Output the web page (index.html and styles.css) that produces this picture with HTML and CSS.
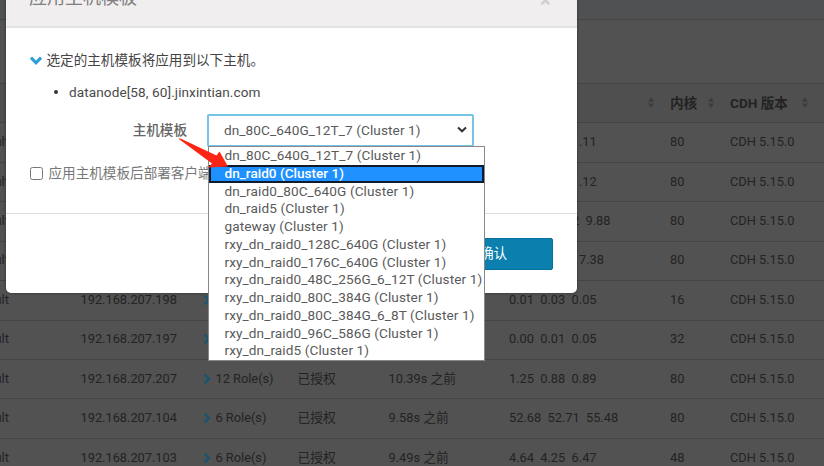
FILE: index.html
```html
<!DOCTYPE html>
<html lang="zh-CN">
<head>
<meta charset="utf-8">
<title>应用主机模板</title>
<link rel="stylesheet" href="styles.css">
</head>
<body>
<svg class="defs" width="0" height="0">
  <symbol id="chev" viewBox="0 0 8 12"><path d="M1.5 1.5 6 6 1.5 10.5" fill="none" stroke="currentColor" stroke-width="2.6"/></symbol>
  <symbol id="sort" viewBox="0 0 6 11"><path d="M0 4.7 3 0.5 6 4.7ZM0 6.5 3 10.7 6 6.5Z" fill="currentColor"/></symbol>
</svg>
<div class="page">
  <div class="topbar"></div>
  <div class="toolbar"></div>
  <div class="row head"><span></span><span></span><span></span><span></span><span></span><span class="load-sort"><svg class="sort"><use href="#sort"/></svg></span><span class="th">内核<svg class="sort"><use href="#sort"/></svg></span><span class="th cdh">CDH 版本<svg class="sort"><use href="#sort"/></svg></span></div>
  <div class="row"><span>ult</span><span></span><span></span><span></span><span></span><span class="tail">.11</span><span>80</span><span>CDH 5.15.0</span></div>
  <div class="row"><span>ult</span><span></span><span></span><span></span><span></span><span class="tail">.12</span><span>80</span><span>CDH 5.15.0</span></div>
  <div class="row"><span>ult</span><span></span><span></span><span></span><span></span><span class="tail wide">2&nbsp; 9.88</span><span>80</span><span>CDH 5.15.0</span></div>
  <div class="row"><span>ult</span><span></span><span></span><span></span><span></span><span class="tail">7.38</span><span>80</span><span>CDH 5.15.0</span></div>
  <div class="row"><span>ult</span><span>192.168.207.198</span><span><svg class="chev"><use href="#chev"/></svg></span><span></span><span></span><span>0.01&nbsp; 0.03&nbsp; 0.05</span><span>16</span><span>CDH 5.15.0</span></div>
  <div class="row"><span>ult</span><span>192.168.207.197</span><span><svg class="chev"><use href="#chev"/></svg></span><span></span><span></span><span>0.00&nbsp; 0.01&nbsp; 0.05</span><span>32</span><span>CDH 5.15.0</span></div>
  <div class="row"><span>ult</span><span>192.168.207.207</span><span><svg class="chev"><use href="#chev"/></svg>12 Role(s)</span><span>已授权</span><span>10.39s 之前</span><span>1.25&nbsp; 0.88&nbsp; 0.89</span><span>80</span><span>CDH 5.15.0</span></div>
  <div class="row"><span>ult</span><span>192.168.207.104</span><span><svg class="chev"><use href="#chev"/></svg>6 Role(s)</span><span>已授权</span><span>9.58s 之前</span><span>52.68&nbsp; 52.71&nbsp; 55.48</span><span>80</span><span>CDH 5.15.0</span></div>
  <div class="row"><span>ult</span><span>192.168.207.103</span><span><svg class="chev"><use href="#chev"/></svg>6 Role(s)</span><span>已授权</span><span>9.49s 之前</span><span>4.64&nbsp; 4.25&nbsp; 6.47</span><span>48</span><span>CDH 5.15.0</span></div>
</div>

<div class="modal">
  <div class="modal-head"><span>应用主机模板</span><span class="close">×</span></div>
  <div class="modal-body">
    <div class="intro"><svg class="down" viewBox="0 0 12 8"><path d="M1.5 1.5 6 6 10.5 1.5" fill="none" stroke="currentColor" stroke-width="2.8"/></svg><span>选定的主机模板将应用到以下主机。</span></div>
    <div class="host"><i></i><span>datanode[58, 60].jinxintian.com</span></div>
    <div class="field">
      <span class="label">主机模板</span>
      <div class="select"><span>dn_80C_640G_12T_7 (Cluster 1)</span><svg viewBox="0 0 10 6"><path d="M1 1 5 4.8 9 1" fill="none" stroke="#333" stroke-width="2"/></svg></div>
    </div>
    <div class="check"><b></b><span>应用主机模板后部署客户端</span></div>
  </div>
  <div class="modal-foot"><div class="btn">确认</div></div>
</div>

<div class="menu">
  <div>dn_80C_640G_12T_7 (Cluster 1)</div>
  <div class="on">dn_raid0 (Cluster 1)</div>
  <div>dn_raid0_80C_640G (Cluster 1)</div>
  <div>dn_raid5 (Cluster 1)</div>
  <div>gateway (Cluster 1)</div>
  <div>rxy_dn_raid0_128C_640G (Cluster 1)</div>
  <div>rxy_dn_raid0_176C_640G (Cluster 1)</div>
  <div>rxy_dn_raid0_48C_256G_6_12T (Cluster 1)</div>
  <div>rxy_dn_raid0_80C_384G (Cluster 1)</div>
  <div>rxy_dn_raid0_80C_384G_6_8T (Cluster 1)</div>
  <div>rxy_dn_raid0_96C_586G (Cluster 1)</div>
  <div>rxy_dn_raid5 (Cluster 1)</div>
</div>
<svg class="arrow" viewBox="0 0 52 32"><path d="M0.5 0.8 Q1.5 0 3 0.8 L38.5 17.5 L41.5 13.5 L50 28.5 L30 29.5 L34 25.5 Z" fill="#fc2414"/></svg>
</body>
</html>
```

FILE: styles.css
```css
* { box-sizing: border-box; }
body {
  margin: 0;
  width: 824px;
  height: 466px;
  overflow: hidden;
  position: relative;
  background: #525252;
  font: 12.8px/18px Roboto, "Noto Sans CJK SC", sans-serif;
  color: #232323;
}
.defs { position: absolute; }
.page { height: 466px; overflow: hidden; }
.topbar { height: 20px; background: #4f5153; border-bottom: 1px solid #434446; }
.toolbar { height: 64px; border-bottom: 1px solid #444; }
.row {
  height: 39.43px;
  padding-bottom: 1px;
  display: grid;
  grid-template-columns: 80.5px 122.5px 94.5px 91px 120.5px 161px 60px 94px;
  align-items: center;
  border-bottom: 1px solid #444;
  white-space: pre;
}
.row > span:first-child { margin-left: -5.5px; }
.row.head { background: #4f4f4f; }
.th { font-weight: 700; font-size: 13.6px; display: flex; align-items: center; gap: 11px; }
.cdh { gap: 14px; }
.sort { width: 6px; height: 11px; color: #3c3c3c; }
.load-sort { padding-left: 139px; display: flex; }
.tail { padding-left: 70px; }
.wide { padding-left: 63px; }
.chev { width: 8px; height: 12px; margin-right: 4.5px; vertical-align: -2px; color: #1f556c; }

.modal {
  position: absolute;
  left: 6px;
  top: -30px;
  width: 571px;
  height: 323px;
  background: #fff;
  border-radius: 0 0 5px 5px;
  box-shadow: 0 0 3px rgba(0, 0, 0, .45);
  color: #4a4a4a;
  font-size: 13.6px;
}
.modal-head {
  height: 58px;
  padding: 15px 26.5px 0 23px;
  display: flex;
  justify-content: space-between;
  background: #f0eeef;
  border-bottom: 2px solid #e4e4e4;
  font-size: 18px;
  line-height: 26px;
  color: #808080;
}
.close { font-size: 20px; font-weight: 700; line-height: 31px; color: #cfcfcf; }
.modal-body { height: 185px; padding: 22px 0 0 23px; }
.intro { display: flex; align-items: center; height: 20px; color: #444; }
.down { width: 14px; height: 9px; margin-right: 3.5px; color: #2a9fd8; }
.host { display: flex; align-items: center; height: 20px; margin-top: 12px; letter-spacing: .08px; }
.host i { width: 4px; height: 4px; border-radius: 50%; background: #333; margin: 0 11px 0 25px; }
.field { display: flex; align-items: center; margin-top: 12px; }
.label { width: 158px; height: 20px; text-align: right; font-weight: 500; color: #666; }
.select {
  width: 267px;
  height: 33px;
  margin-left: 20px;
  padding: 0 5px 2px 15px;
  display: flex;
  align-items: center;
  justify-content: space-between;
  border: 2px solid #74c4e6;
  border-radius: 2px;
  color: #5a5a5a;
  letter-spacing: .1px;
}
.select svg { width: 10px; height: 7px; }
.check { display: flex; align-items: center; margin-top: 17px; color: #777; }
.check b { width: 13px; height: 13px; border: 1px solid #777; border-radius: 2.5px; margin: 0 6px 0 0.5px; }
.modal-foot { height: 80px; border-top: 1px solid #ddd; padding: 24px 24px 0 0; }
.btn {
  width: 119px;
  height: 32px;
  margin-left: auto;
  border: 1px solid #0870a0;
  border-radius: 2px;
  background: #0b7fad;
  color: #fff;
  text-align: center;
  line-height: 29px;
}
.menu {
  position: absolute;
  left: 208px;
  top: 146px;
  width: 277px;
  height: 215px;
  border: 1px solid #888;
  background: #fff;
  color: #5a5a5a;
  font-size: 13.6px;
  letter-spacing: .1px;
  line-height: 17.77px;
  white-space: nowrap;
}
.menu div { height: 17.77px; padding-left: 15.5px; }
.menu .on { background: #1e90ff; color: #fff; font-weight: 500; letter-spacing: 0; box-shadow: inset 0 0 0 2px #101c2c; }
.arrow { position: absolute; left: 178px; top: 138px; width: 52px; height: 32px; }
```
